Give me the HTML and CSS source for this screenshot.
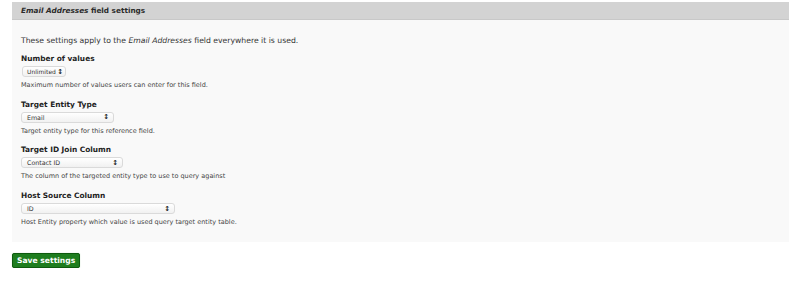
FILE: index.html
```html
<!DOCTYPE html>
<html lang="en">
<head>
  <meta charset="UTF-8">
  <title>Email Addresses field settings</title>
  <link rel="stylesheet" href="styles.css">
</head>
<body>
  <div class="fieldset">
    <div class="legend"><em>Email Addresses</em> field settings</div>
    <div class="fieldset-body">
      <p class="intro">These settings apply to the <em>Email Addresses</em> field everywhere it is used.</p>

      <div class="form-item">
        <label>Number of values</label>
        <div class="select w-unlimited"><span>Unlimited</span><span class="arrows">&#8597;</span></div>
        <div class="description">Maximum number of values users can enter for this field.</div>
      </div>

      <div class="form-item">
        <label>Target Entity Type</label>
        <div class="select w-email"><span>Email</span><span class="arrows">&#8597;</span></div>
        <div class="description">Target entity type for this reference field.</div>
      </div>

      <div class="form-item">
        <label>Target ID Join Column</label>
        <div class="select w-contact"><span>Contact ID</span><span class="arrows">&#8597;</span></div>
        <div class="description">The column of the targeted entity type to use to query against</div>
      </div>

      <div class="form-item">
        <label>Host Source Column</label>
        <div class="select w-id"><span>ID</span><span class="arrows">&#8597;</span></div>
        <div class="description">Host Entity property which value is used query target entity table.</div>
      </div>
    </div>
  </div>

  <button class="save">Save settings</button>
</body>
</html>
```

FILE: styles.css
```css
body {
  margin: 0;
  padding: 2px 11px 0 12px;
  background: #fff;
  font-family: "DejaVu Sans", Verdana, sans-serif;
  color: #333;
}
.fieldset {
  background: #f9f9f9;
  height: 240px;
}
.legend {
  background: #d3d3d3;
  border-bottom: 1px solid #c8c8c8;
  height: 17px;
  line-height: 17px;
  padding-left: 9px;
  font-size: 7.3px;
  font-weight: bold;
  color: #2b2b2b;
}
.fieldset-body {
  padding: 15px 9px 0 9px;
}
.intro {
  margin: 0 0 7px 0;
  font-size: 7.7px;
  line-height: 11px;
  color: #333;
}
.form-item {
  margin-bottom: 8.7px;
}
.form-item:last-child {
  margin-bottom: 0;
}
.form-item label {
  display: block;
  font-size: 7.4px;
  font-weight: bold;
  color: #222;
  line-height: 11px;
  margin-bottom: 2px;
}
.select {
  display: flex;
  align-items: center;
  justify-content: space-between;
  box-sizing: border-box;
  height: 11px;
  padding: 0 4px 0 5px;
  border: 1px solid #dadada;
  border-radius: 3px;
  background: linear-gradient(#ffffff, #f1f1f1);
  font-size: 6.3px;
  color: #333;
}
.arrows {
  font-size: 7px;
  font-weight: bold;
  color: #222;
}
.w-unlimited { width: 44px; margin-left: 1px; padding: 0 2px 0 4px; font-size: 6px; }
.w-email { width: 93px; }
.w-contact { width: 102px; }
.w-id { width: 154px; }
.description {
  font-size: 6.5px;
  line-height: 9px;
  margin-top: 4px;
  color: #444;
}
.save {
  display: block;
  margin-top: 11px;
  height: 15px;
  padding: 0 4px;
  background: #1e7d1e;
  border: 1px solid #0e5a0e;
  border-radius: 2px;
  box-shadow: 0 0 1px #9c9;
  color: #fff;
  font-family: "DejaVu Sans", Verdana, sans-serif;
  font-size: 7.6px;
  font-weight: bold;
  line-height: 13px;
}
```
